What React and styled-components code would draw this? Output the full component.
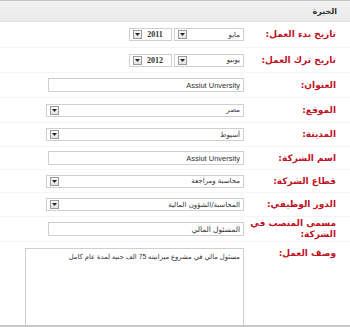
import React from "react";
import styled, { createGlobalStyle } from "styled-components";

const Global = createGlobalStyle`
  html, body { margin: 0; padding: 0; background: #fff; }
  body { font-family: "DejaVu Sans", "Noto Sans", sans-serif; }
`;

const Panel = styled.div`
  direction: rtl;
  width: 350px;
  height: 327px;
  box-sizing: border-box;
  border-bottom: 2px solid #c8c8c8;
  overflow: hidden;
  display: flex;
  flex-direction: column;
`;

const Header = styled.div`
  height: 22px;
  box-sizing: border-box;
  border-top: 1px solid #c4c4c4;
  background: linear-gradient(#f2f2f2, #e9e9e9);
  border-bottom: 1px solid #e2e2e2;
  display: flex;
  align-items: center;
  padding-right: 13px;
  font-size: 8px;
  font-weight: bold;
  color: #333;
`;

const Row = styled.div`
  display: grid;
  grid-template-columns: 100px 1fr;
  align-items: ${(p) => (p.$top ? "start" : "center")};
  height: ${(p) => p.$h}px;
  box-sizing: border-box;
  border-bottom: ${(p) => (p.$last ? "none" : "1px solid #f5f5f5")};
  padding-top: ${(p) => (p.$top ? 6 : 0)}px;
  flex: ${(p) => (p.$last ? 1 : "none")};
`;

const Label = styled.div`
  padding-right: 14px;
  font-size: 9px;
  font-weight: bold;
  color: #c1121f;
  line-height: 11px;
`;

const Field = styled.div`
  display: flex;
  gap: 2px;
  padding-right: 6px;
  align-items: flex-start;
  height: ${(p) => (p.$fill ? "100%" : "auto")};
`;

const TextInput = styled.div`
  width: 196px;
  height: 14px;
  box-sizing: border-box;
  border: 1px solid #cfcfcf;
  background: #fff;
  display: flex;
  align-items: center;
  padding: 0 3px;
  font-family: "Liberation Sans", "DejaVu Sans", sans-serif;
  font-size: 7.5px;
  color: #333;
  white-space: nowrap;
`;

const Area = styled.div`
  width: 219px;
  height: 100%;
  box-sizing: border-box;
  border: 1px solid #cfcfcf;
  border-bottom: none;
  padding: 4px 3px;
  font-family: "Liberation Sans", "DejaVu Sans", sans-serif;
  font-size: 6.8px;
  color: #333;
  white-space: nowrap;
`;

const Select = styled.div`
  width: ${(p) => p.$w}px;
  height: 13px;
  box-sizing: border-box;
  border: 1px solid #cfcfcf;
  background: #fff;
  display: flex;
  align-items: center;
  padding: 0 3px;
  font-size: ${(p) => (p.$num ? 8 : 7)}px;
  font-family: ${(p) =>
    p.$num ? '"Liberation Serif", serif' : '"DejaVu Sans", sans-serif'};
  font-weight: ${(p) => (p.$num ? "bold" : "normal")};
  color: #333;
  white-space: nowrap;
`;

const SelectText = styled.span`
  flex: 1;
  text-align: ${(p) => (p.$center ? "center" : "right")};
`;

const Arrow = styled.span`
  width: 9px;
  height: 9px;
  box-sizing: border-box;
  border: 1px solid #9a9a9a;
  background: linear-gradient(#fdfdfd, #e2e2e2);
  display: flex;
  align-items: center;
  justify-content: center;
  flex: none;
`;

const Caret = () => (
  <svg width="5" height="3" viewBox="0 0 5 3">
    <path d="M0 0H5L2.5 3Z" fill="#222" />
  </svg>
);

const Dropdown = ({ w, value, num, center }) => (
  <Select $w={w} $num={num}>
    <SelectText $center={center}>{value}</SelectText>
    <Arrow>
      <Caret />
    </Arrow>
  </Select>
);

const DateField = ({ month, year }) => (
  <Field>
    <Dropdown w={70} value={month} />
    <Dropdown w={43} value={year} num center />
  </Field>
);

export default function App() {
  return (
    <>
      <Global />
      <Panel>
        <Header>الخبرة</Header>
        <Row $h={26}>
          <Label>تاريخ بدء العمل:</Label>
          <DateField month="مايو" year="2011" />
        </Row>
        <Row $h={25}>
          <Label>تاريخ ترك العمل:</Label>
          <DateField month="يونيو" year="2012" />
        </Row>
        <Row $h={25}>
          <Label>العنوان:</Label>
          <Field>
            <TextInput>Assiut Unversity</TextInput>
          </Field>
        </Row>
        <Row $h={25}>
          <Label>الموقع:</Label>
          <Field>
            <Dropdown w={198} value="مصر" />
          </Field>
        </Row>
        <Row $h={24}>
          <Label>المدينة:</Label>
          <Field>
            <Dropdown w={198} value="أسيوط" />
          </Field>
        </Row>
        <Row $h={23}>
          <Label>اسم الشركة:</Label>
          <Field>
            <TextInput>Assiut Unversity</TextInput>
          </Field>
        </Row>
        <Row $h={23}>
          <Label>قطاع الشركة:</Label>
          <Field>
            <Dropdown w={198} value="محاسبة ومراجعة" />
          </Field>
        </Row>
        <Row $h={24}>
          <Label>الدور الوظيفي:</Label>
          <Field>
            <Dropdown w={198} value="المحاسبة/الشؤون المالية" />
          </Field>
        </Row>
        <Row $h={25}>
          <Label>مسمى المنصب في الشركة:</Label>
          <Field>
            <TextInput>المسئول المالي</TextInput>
          </Field>
        </Row>
        <Row $h={85} $top $last>
          <Label>وصف العمل:</Label>
          <Field $fill>
            <Area>مسئول مالي في مشروع ميزانيته 75 الف جنيه لمدة عام كامل</Area>
          </Field>
        </Row>
      </Panel>
    </>
  );
}
